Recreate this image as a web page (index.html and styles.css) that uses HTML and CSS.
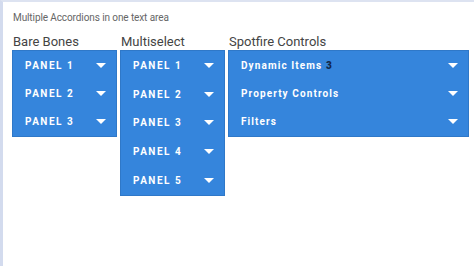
FILE: index.html
```html
<!DOCTYPE html>
<html>
<head>
<meta charset="utf-8">
<link rel="stylesheet" href="styles.css">
</head>
<body>
<div class="frame">
  <div class="title">Multiple Accordions in one text area</div>
  <div class="groups">
    <div class="group narrow">
      <div class="heading">Bare Bones</div>
      <div class="panel">
        <div class="row caps"><span>PANEL 1</span><i class="arrow"></i></div>
        <div class="row caps"><span>PANEL 2</span><i class="arrow"></i></div>
        <div class="row caps"><span>PANEL 3</span><i class="arrow"></i></div>
      </div>
    </div>
    <div class="group narrow">
      <div class="heading">Multiselect</div>
      <div class="panel tall">
        <div class="row caps"><span>PANEL 1</span><i class="arrow"></i></div>
        <div class="row caps"><span>PANEL 2</span><i class="arrow"></i></div>
        <div class="row caps"><span>PANEL 3</span><i class="arrow"></i></div>
        <div class="row caps"><span>PANEL 4</span><i class="arrow"></i></div>
        <div class="row caps"><span>PANEL 5</span><i class="arrow"></i></div>
      </div>
    </div>
    <div class="group wide">
      <div class="heading">Spotfire Controls</div>
      <div class="panel">
        <div class="row"><span>Dynamic Items <b class="count">3</b></span><i class="arrow"></i></div>
        <div class="row"><span>Property Controls</span><i class="arrow"></i></div>
        <div class="row"><span>Filters</span><i class="arrow"></i></div>
      </div>
    </div>
  </div>
</div>
</body>
</html>
```
FILE: styles.css
```css
html, body {
  margin: 0;
  padding: 0;
  background: #ffffff;
}
.frame {
  width: 474px;
  height: 266px;
  box-sizing: border-box;
  border-left: 3px solid #d3dbee;
  border-top: 2px solid #dde3f1;
  padding: 10px 0 0 9px;
  font-family: Roboto, "Liberation Sans", sans-serif;
}
.title {
  font-size: 10px;
  color: #666;
  line-height: 12px;
  letter-spacing: -0.1px;
  padding-left: 1px;
}
.groups {
  display: flex;
  gap: 3px;
  margin-top: 9px;
  align-items: flex-start;
}
.group.narrow { width: 105px; }
.group.wide { width: 241px; }
.heading {
  font-size: 13px;
  color: #444;
  line-height: 17px;
  padding-left: 1px;
}
.panel {
  background: #3585dc;
  border: 1px solid #2f78c8;
}
.row {
  height: 28.4px;
  display: flex;
  align-items: center;
  justify-content: space-between;
  padding: 0 10px 0 12px;
  color: #fff;
  font-weight: 700;
  font-size: 10px;
  letter-spacing: 1.1px;
}
.panel.tall .row {
  height: 28.8px;
}
.row.caps {
  letter-spacing: 1.5px;
}
.count {
  color: #13284a;
}
.arrow {
  width: 0;
  height: 0;
  border-left: 5px solid transparent;
  border-right: 5px solid transparent;
  border-top: 5px solid #fff;
}
```
